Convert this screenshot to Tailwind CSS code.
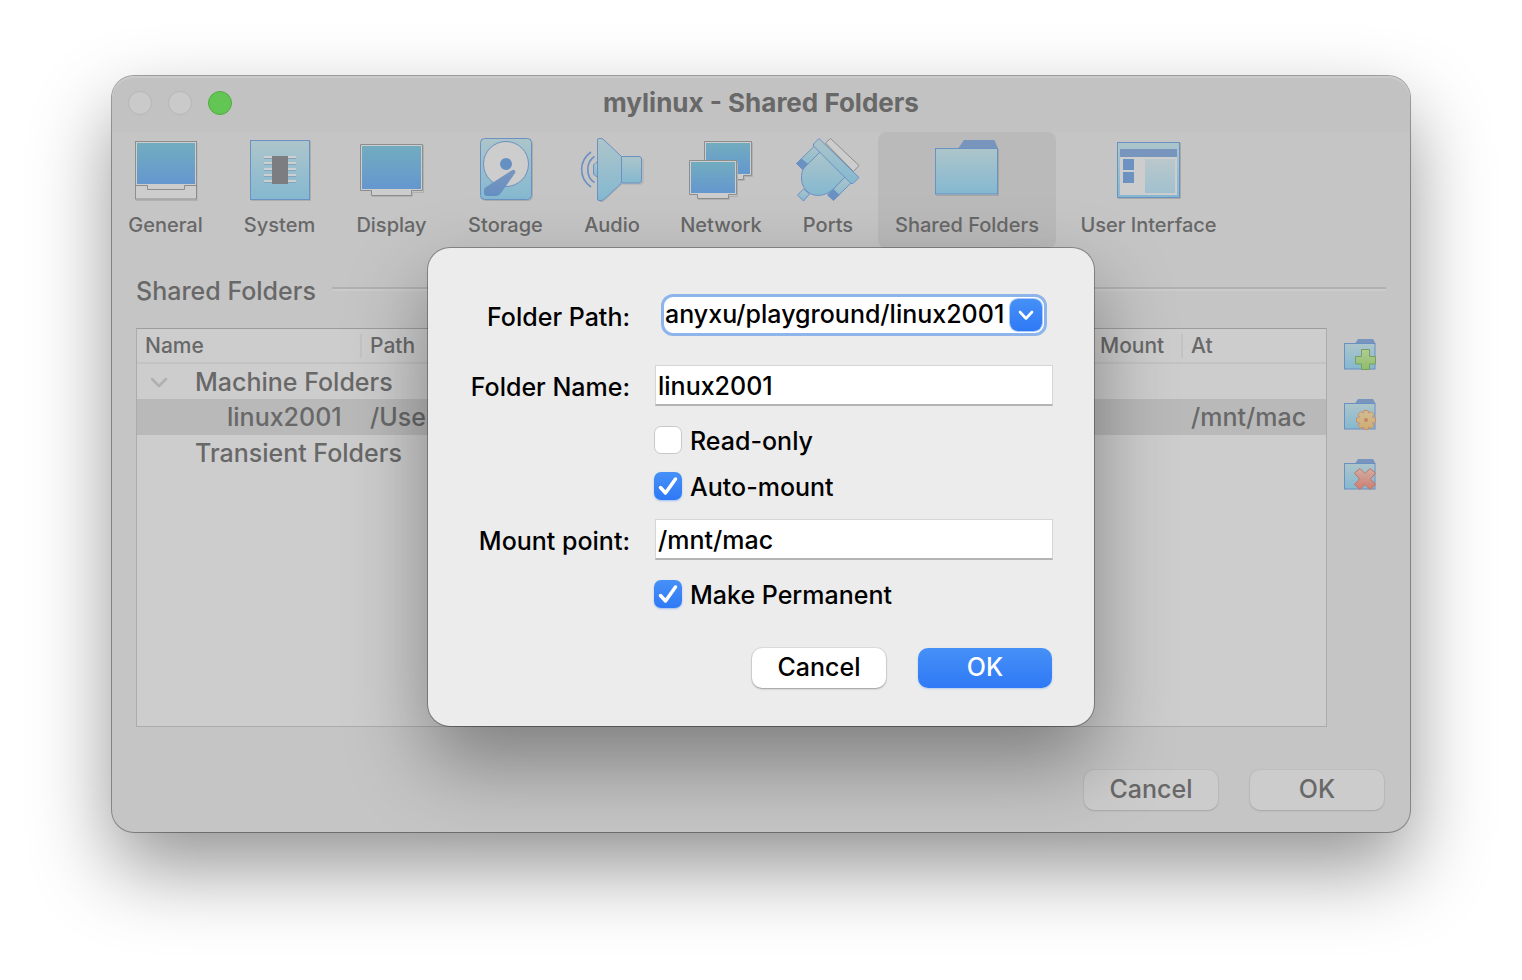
<!DOCTYPE html>
<html lang="en">
<head>
  <meta charset="UTF-8">
  <meta name="viewport" content="width=device-width, initial-scale=1.0">
  <title>mylinux - Shared Folders</title>
  <script src="https://cdn.jsdelivr.net/npm/@tailwindcss/browser@4"></script>
</head>
<body class="bg-white font-['Inter',sans-serif] text-[25px] leading-8 font-medium text-[#686868]">

  <!-- Shared gradients for the icons -->
  <svg class="absolute size-0" aria-hidden="true">
    <defs>
      <linearGradient id="pale" x1="0" y1="0" x2="0" y2="1"><stop offset="0" stop-color="#adc5ca"/><stop offset="1" stop-color="#84b8d0"/></linearGradient>
      <linearGradient id="screen" x1="0" y1="0" x2="0" y2="1"><stop offset="0" stop-color="#72acbf"/><stop offset="1" stop-color="#6497cf"/></linearGradient>
      <linearGradient id="dark" x1="0" y1="0" x2="0" y2="1"><stop offset="0" stop-color="#7a96bd"/><stop offset="1" stop-color="#658fc2"/></linearGradient>
      <linearGradient id="green" x1="0" y1="0" x2="0" y2="1"><stop offset="0" stop-color="#b0cb94"/><stop offset="1" stop-color="#8fbd69"/></linearGradient>
      <linearGradient id="orange" x1="0" y1="0" x2="0" y2="1"><stop offset="0" stop-color="#d0bd96"/><stop offset="1" stop-color="#d0ac70"/></linearGradient>
      <linearGradient id="red" x1="0" y1="0" x2="0" y2="1"><stop offset="0" stop-color="#d0ada4"/><stop offset="1" stop-color="#ce7e70"/></linearGradient>
    </defs>
  </svg>

  <main class="px-28 pt-[76px] pb-[148px]">
    <div class="relative rounded-[22px] bg-[#c5c5c5] shadow-[0_36px_80px_rgb(0_0_0/0.42),0_0_0_1px_#a6a6a6]">

      <!-- Title bar -->
      <header class="relative flex h-14 items-center justify-center rounded-t-[22px] bg-[#c2c2c2] pb-0.5 shadow-[inset_0_2px_0_#cbcbcb]">
        <div class="absolute left-4 flex gap-4">
          <button aria-label="Close" class="size-6 rounded-full border border-[#b6b6b6] bg-[#cacaca]"></button>
          <button aria-label="Minimize" class="size-6 rounded-full border border-[#b6b6b6] bg-[#cacaca]"></button>
          <button aria-label="Zoom" class="size-6 rounded-full border border-[#54ab45] bg-[#62c554]"></button>
        </div>
        <h1 class="text-[26px] leading-8 font-bold">mylinux - Shared Folders</h1>
      </header>

      <!-- Toolbar -->
      <nav class="flex gap-2 text-xl leading-6">
        <button class="flex h-[116px] w-[107px] flex-col items-center gap-[11px] pt-1.5">
          <svg class="size-16" viewBox="0 0 64 64" fill="none">
            <path d="M2 62.500H64V5" stroke="#b0b0b0"/>
            <rect x="1.500" y="3.500" width="61" height="57.500" fill="#cdcdcd" stroke="#8d8d8d"/>
            <rect x="3" y="5" width="58" height="41" fill="url(#screen)"/>
            <path d="M1.500 47.500H13.500V51.500H50.500V47.500H62.500" stroke="#8d8d8d"/>
          </svg>
          General
        </button>
        <button class="flex h-[116px] w-[105px] flex-col items-center gap-[11px] pt-1.5">
          <svg class="size-16" viewBox="0 0 64 64" fill="none">
            <path d="M3 62.500H62.500V3" stroke="#adadad"/>
            <rect x="2.500" y="2.500" width="59" height="59" fill="url(#pale)" stroke="#6b90c2"/>
            <path d="M16 19H48M16 25H48M16 31H48M16 37H48M16 43H48" stroke="#cfcfcf" stroke-width="2"/>
            <path d="M16 20.500H48M16 26.500H48M16 32.500H48M16 38.500H48M16 44.500H48" stroke="#84a5c0"/>
            <rect x="24" y="18" width="16" height="28" fill="#7c7d80"/>
          </svg>
          System
        </button>
        <button class="flex h-[116px] w-[103px] flex-col items-center gap-[11px] pt-1.5">
          <svg class="size-16" viewBox="0 0 64 64" fill="none">
            <path d="M12 58.500H52.500V54.500H63.500V7" stroke="#b0b0b0"/>
            <path d="M.5 6.500H62.500V52.500H51.500V57.500H11.500V52.500H.5Z" fill="#cdcdcd" stroke="#8d8d8d"/>
            <rect x="2" y="8" width="59" height="43" fill="url(#screen)"/>
          </svg>
          Display
        </button>
        <button class="flex h-[116px] w-[109px] flex-col items-center gap-[11px] pt-1.5">
          <svg class="size-16" viewBox="0 0 64 64" fill="none">
            <rect x="7.500" y="1.500" width="51" height="61" rx="4" stroke="#acacac"/>
            <rect x="6.500" y=".5" width="51" height="61" rx="4" fill="url(#pale)" stroke="#6b90c2"/>
            <circle cx="32" cy="26" r="22.500" fill="#cdcdcd" stroke="#6b90c2"/>
            <circle cx="32" cy="26" r="6" fill="#6690c2"/>
            <path d="M37.500 32.500Q41.500 30.500 41.500 34.500L27 55Q25 58 22.500 58H13Q10 58 10 55V52Q10 50 12 49Z" fill="url(#dark)"/>
          </svg>
          Storage
        </button>
        <button class="flex h-[116px] w-[88px] flex-col items-center gap-[11px] pt-1.5">
          <svg class="size-16" viewBox="0 0 64 64" fill="none">
            <path d="M14.500 18.500C5.500 24 5.500 39 14.500 44.500M11 14C-1.500 23 -1.500 40 11 49" stroke="#6b90c2" stroke-width="1.600"/>
            <path d="M43 46H61Q63 46 63 43V21M20 63.500H23L42 46" stroke="#acacac"/>
            <g fill="url(#pale)" stroke="#6b90c2">
              <path d="M17.500 24.500H16L13.500 27V36L16 38.500H17.500Z"/>
              <path d="M17.500 2Q17.500 .5 19 .5H21Q23 .5 24 2L41.500 18.500V45L24.500 61Q23 62.500 21 62.500H19Q17.500 62.500 17.500 61Z"/>
              <path d="M41.500 18.500H59Q61.500 18.500 61.500 21V42Q61.500 45 59 45H41.500Z"/>
            </g>
          </svg>
          Audio
        </button>
        <button class="flex h-[116px] w-[114px] flex-col items-center gap-[11px] pt-1.5">
          <svg class="size-16" viewBox="0 0 64 64" fill="none">
            <path d="M48 42.500H55.500V38.500H63.500V5" stroke="#b0b0b0"/>
            <path d="M15.500 3.500H62.500V37.500H54.500V41.500H24.500V37.500H15.500Z" fill="#cdcdcd" stroke="#8d8d8d"/>
            <rect x="17" y="5" width="44" height="31" fill="url(#screen)"/>
            <path d="M9 61.500H40.500V58.500H48.500V24" stroke="#b0b0b0"/>
            <path d="M.5 22.500H47.500V56.500H39.500V60.500H8.500V56.500H.5Z" fill="#cdcdcd" stroke="#8d8d8d"/>
            <rect x="2" y="24" width="44" height="31" fill="url(#screen)"/>
          </svg>
          Network
        </button>
        <button class="flex h-[116px] w-[84px] flex-col items-center gap-[11px] pt-1.5">
          <svg class="size-16" viewBox="0 0 64 64" fill="none" stroke-linejoin="round">
            <path d="M34.500 .5 63 27.500 57.500 33.500 29.500 5Z" fill="#cdcdcd" stroke="#8d8d8d"/>
            <g fill="url(#pale)" stroke="#6b90c2">
              <path d="M18.500 8 .5 25.500 6.500 31.500 24.500 13.500Z"/>
              <path d="M49.500 38.500 31.500 57 37.500 62.500 55.500 44.500Z"/>
              <path d="M7.500 51 1.500 57 7.500 63 13.500 56Z"/>
              <path d="M24.500 13.500 49.500 38.500 36.500 51.500C24 63 5.500 57 5.500 40 5.500 33 7 30.500 11.500 26.500Z"/>
              <path d="M23 .5 63 39.500 57 45.500H55L17.500 8V6Z"/>
            </g>
            <path d="M.5 25.500 5.500 20.500 12 26 6.500 31.500ZM31.500 57 37.500 51 43.500 57 37.500 62.500Z" fill="#6b90c2"/>
          </svg>
          Ports
        </button>
        <button aria-current="page" class="flex h-[116px] w-[178px] flex-col items-center gap-[11px] rounded-lg bg-[#bababa] pt-1.5">
          <svg class="size-16" viewBox="0 0 64 64" fill="none">
            <path d="M1 57.500H63.500V11" stroke="#a5a5a5"/>
            <path d="M23 10.500 29 2H59.500L63 10.500Z" fill="#7895bd"/>
            <rect x=".5" y="10.500" width="62" height="45.500" fill="url(#pale)" stroke="#6b90c2"/>
          </svg>
          Shared Folders
        </button>
        <button class="flex h-[116px] w-[169px] flex-col items-center gap-[11px] pt-1.5">
          <svg class="size-16" viewBox="0 0 64 64" fill="none">
            <path d="M1 60.500H63.500V5" stroke="#a9a9a9"/>
            <rect x=".5" y="4.500" width="62" height="55" fill="url(#pale)" stroke="#6b90c2"/>
            <rect x="3" y="11" width="57" height="8" fill="#7895bd"/>
            <rect x="3" y="19" width="57" height="38" fill="#cdcdcd"/>
            <path d="M6 21H17V32H6ZM6 34H17V45H6Z" fill="#6b92c0"/>
            <rect x="28" y="21" width="30" height="34" fill="url(#pale)" opacity=".6"/>
          </svg>
          User Interface
        </button>
      </nav>

      <!-- Page content -->
      <section class="px-6 pt-[27px] pb-[22px]">
        <div class="flex items-center gap-4">
          <h2>Shared Folders</h2>
          <div class="mb-1 h-1 flex-1 border-y-2 border-t-[#b1b1b1] border-b-[#cbcbcb]"></div>
        </div>

        <div class="mt-[21px] flex gap-4">
          <div class="h-[399px] flex-1 border border-[#acacac] border-t-[#9c9c9c] bg-[#cdcdcd]">
            <table class="w-full table-fixed border-collapse text-left">
              <colgroup>
                <col class="w-[225px]">
                <col>
                <col class="w-[91px]">
                <col class="w-[143px]">
              </colgroup>
              <thead class="text-[21px] leading-8">
                <tr class="h-[34px] border-b-2 border-[#c3c3c3]">
                  <th class="px-2 font-medium"><div class="flex justify-between">Name <span class="-mr-2 my-1 w-0.5 bg-[#c3c3c3]"></span></div></th>
                  <th class="px-2 font-medium">Path</th>
                  <th class="px-2 font-medium"><div class="flex justify-between">Mount <span class="-mr-2 my-1 w-0.5 bg-[#c3c3c3]"></span></div></th>
                  <th class="px-2 font-medium">At</th>
                </tr>
              </thead>
              <tbody>
                <tr class="h-9">
                  <td colspan="4" class="pl-3.5">
                    <div class="flex items-center gap-[26px]">
                      <svg class="size-[18px]" viewBox="0 0 18 18" fill="none" stroke="#b0b0b0" stroke-width="2.500" stroke-linecap="round" stroke-linejoin="round"><path d="M1 6 8 13 15 6"/></svg>
                      Machine Folders
                    </div>
                  </td>
                </tr>
                <tr class="h-9 bg-[#b9b9b9]">
                  <td class="pl-[90px]">linux2001</td>
                  <td class="px-2">/Use</td>
                  <td></td>
                  <td class="px-2">/mnt/mac</td>
                </tr>
                <tr class="h-9">
                  <td colspan="4" class="pl-[58px]">Transient Folders</td>
                </tr>
              </tbody>
            </table>
          </div>

          <div class="flex w-[43px] flex-col gap-7 pt-[11px] pl-px">
            <button aria-label="Add shared folder" class="size-8">
              <svg class="size-8" viewBox="0 0 32 32" fill="none">
                <path d="M11 4.500 14 0H29L31.500 4.500Z" fill="#7895bd"/>
                <rect x=".5" y="4.500" width="30.500" height="25.500" fill="url(#pale)" stroke="#6b90c2"/>
                <path d="M17.500 10.500H25.500V17.500H31.500V25H25.500V30.500H17.500V25H11.500V17.500H17.500Z" fill="url(#green)" stroke="#77a060"/>
              </svg>
            </button>
            <button aria-label="Edit shared folder" class="size-8">
              <svg class="size-8" viewBox="0 0 32 32" fill="none">
                <path d="M11 4.500 14 0H29L31.500 4.500Z" fill="#7895bd"/>
                <rect x=".5" y="4.500" width="30.500" height="25.500" fill="url(#pale)" stroke="#6b90c2"/>
                <path d="M20 11.500H24L24.500 14 27 12.500 30 15.500 28.500 18 31.500 19V23L28.500 24 30 26.500 27 29.500 24.500 28 24 30.500H20L19.500 28 17 29.500 14 26.500 15.500 24 12.500 23V19L15.500 18 14 15.500 17 12.500 19.500 14Z" fill="url(#orange)" stroke="#c98e6c" stroke-linejoin="round"/>
                <circle cx="22" cy="21" r="2" fill="#c98468"/>
              </svg>
            </button>
            <button aria-label="Remove shared folder" class="size-8">
              <svg class="size-8" viewBox="0 0 32 32" fill="none">
                <path d="M11 4.500 14 0H29L31.500 4.500Z" fill="#7895bd"/>
                <rect x=".5" y="4.500" width="30.500" height="25.500" fill="url(#pale)" stroke="#6b90c2"/>
                <path d="M16 9.500 21 14.500 26 9.500 31.500 14 26.500 20 31.500 25.500 26 30.500 21 25.500 16 30.500 10.500 25.500 15.500 20 10.500 14Z" fill="url(#red)" stroke="#c27462" stroke-linejoin="round"/>
              </svg>
            </button>
          </div>
        </div>

        <div class="mt-[43px] flex justify-end gap-8 pr-0.5">
          <button class="h-10 w-[134px] rounded-[10px] bg-[#cccccc] pb-0.5 shadow-[0_1px_2px_rgb(0_0_0/0.12),0_0_0_1px_rgb(0_0_0/0.03)]">Cancel</button>
          <button class="h-10 w-[134px] rounded-[10px] bg-[#cccccc] pb-0.5 shadow-[0_1px_2px_rgb(0_0_0/0.12),0_0_0_1px_rgb(0_0_0/0.03)]">OK</button>
        </div>
      </section>

      <!-- Sheet for editing a share -->
      <div class="absolute inset-x-0 top-[172px] flex justify-center">
        <form role="dialog" aria-label="Edit Share" class="w-[666px] rounded-[22px] bg-[#ececec] pt-[46px] pr-[41px] pb-[38px] text-black shadow-[0_36px_80px_rgb(0_0_0/0.36),0_0_0_1px_rgb(0_0_0/0.3)]">
          <div class="flex items-center gap-[25px]">
            <label for="path" class="w-[202px] pt-1 text-right">Folder Path:</label>
            <div class="mx-1.5 flex h-[42px] flex-1 items-center overflow-hidden rounded-xl border-3 border-[#8db5ec] bg-white pr-0.5">
              <input id="path" type="text" value="anyxu/playground/linux2001" class="h-9 min-w-0 flex-1 pb-0.5 pl-px outline-none">
              <button type="button" aria-label="Choose folder" class="flex size-8 items-center justify-center rounded-lg bg-linear-to-b from-[#4690f7] to-[#2f79f6] shadow-[0_0_0_1px_#a9cbfb]">
                <svg class="size-4" viewBox="0 0 16 16" fill="none" stroke="#fff" stroke-width="2.600" stroke-linecap="round" stroke-linejoin="round"><path d="M2 5 8 11.500 14 5"/></svg>
              </button>
            </div>
          </div>

          <div class="mt-[29px] flex items-center gap-[25px]">
            <label for="name" class="w-[202px] pt-0.5 text-right">Folder Name:</label>
            <input id="name" type="text" value="linux2001" class="h-[41px] min-w-0 flex-1 border border-b-2 border-[#d6d6d6] border-b-[#b4b4b4] bg-white pt-0.5 pl-0.5 outline-none">
          </div>

          <div class="mt-5 flex h-7 items-center gap-2 pl-[226px]">
            <input id="readonly" type="checkbox" class="size-7 appearance-none rounded-[7px] border border-[#c9c9c9] bg-white">
            <label for="readonly" class="pt-0.5">Read-only</label>
          </div>

          <div class="relative mt-[18px] flex h-7 items-center gap-2 pl-[226px]">
            <input id="automount" type="checkbox" checked class="size-7 appearance-none rounded-[7px] bg-linear-to-b from-[#4690f7] to-[#2f79f6] shadow-[0_1px_2px_rgb(47_121_246/0.4)]">
            <svg class="pointer-events-none absolute left-[226px] size-7" viewBox="0 0 28 28" fill="none" stroke="#fff" stroke-width="3.500" stroke-linecap="round" stroke-linejoin="round"><path d="M6.500 15.500 11.500 21 21.500 7"/></svg>
            <label for="automount" class="pt-0.5">Auto-mount</label>
          </div>

          <div class="mt-[19px] flex items-center gap-[25px]">
            <label for="mount" class="w-[202px] pt-0.5 text-right">Mount point:</label>
            <input id="mount" type="text" value="/mnt/mac" class="h-[41px] min-w-0 flex-1 border border-b-2 border-[#d6d6d6] border-b-[#b4b4b4] bg-white pt-0.5 pl-0.5 outline-none">
          </div>

          <div class="relative mt-5 flex h-7 items-center gap-2 pl-[226px]">
            <input id="permanent" type="checkbox" checked class="size-7 appearance-none rounded-[7px] bg-linear-to-b from-[#4690f7] to-[#2f79f6] shadow-[0_1px_2px_rgb(47_121_246/0.4)]">
            <svg class="pointer-events-none absolute left-[226px] size-7" viewBox="0 0 28 28" fill="none" stroke="#fff" stroke-width="3.500" stroke-linecap="round" stroke-linejoin="round"><path d="M6.500 15.500 11.500 21 21.500 7"/></svg>
            <label for="permanent" class="pt-0.5">Make Permanent</label>
          </div>

          <div class="mt-10 flex justify-end gap-8 pr-px">
            <button type="button" class="h-10 w-[134px] rounded-[10px] bg-white pb-0.5 shadow-[0_1px_2px_rgb(0_0_0/0.3),0_0_0_1px_rgb(0_0_0/0.06)]">Cancel</button>
            <button type="submit" class="h-10 w-[134px] rounded-[10px] bg-linear-to-b from-[#4690f7] to-[#2f79f6] pb-0.5 text-white shadow-[0_1px_2px_rgb(47_121_246/0.3)]">OK</button>
          </div>
        </form>
      </div>
    </div>
  </main>
</body>
</html>
